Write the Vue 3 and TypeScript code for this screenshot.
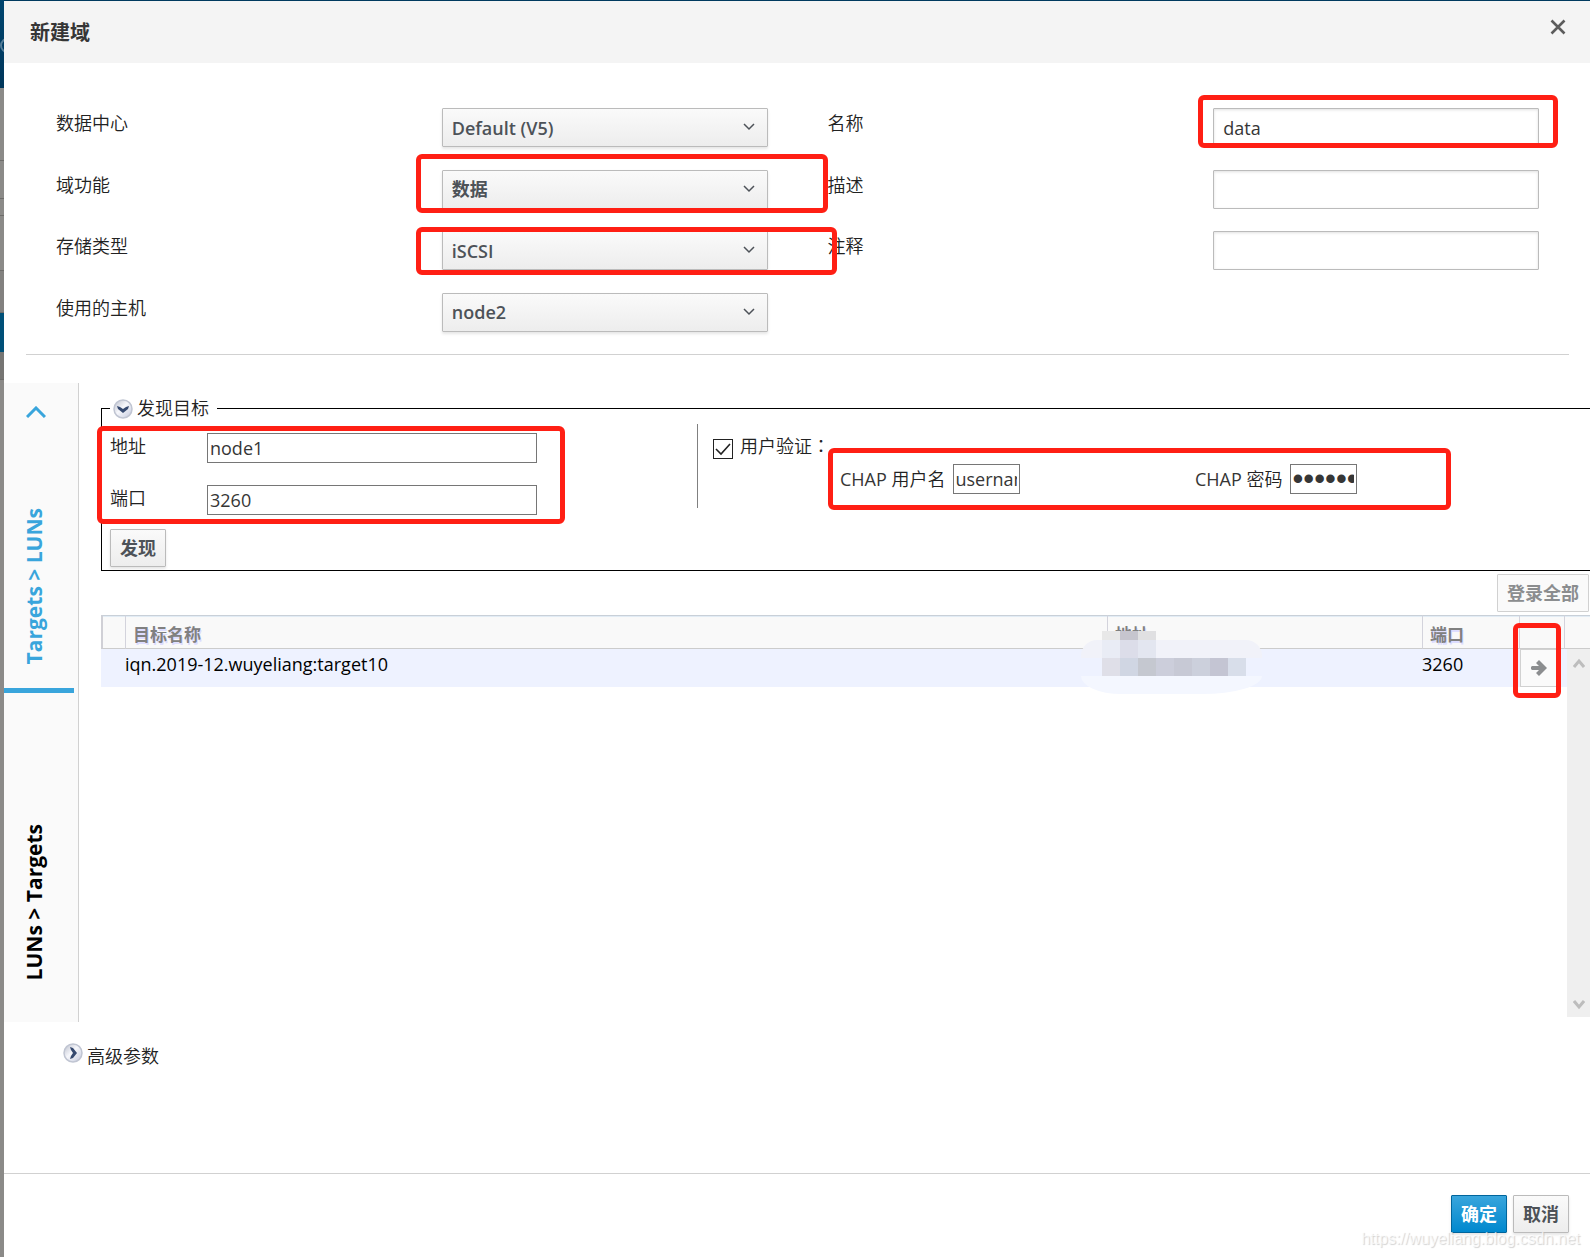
<script setup lang="ts">
import { ref } from 'vue'

interface Field {
  id: string
  label: string
  value: string
  mark?: string
}

const selects = ref<Field[]>([
  { id: 'data-center', label: '数据中心', value: 'Default (V5)' },
  { id: 'domain-function', label: '域功能', value: '数据', mark: 'mark-function' },
  { id: 'storage-type', label: '存储类型', value: 'iSCSI', mark: 'mark-type' },
  { id: 'host', label: '使用的主机', value: 'node2' },
])

const inputs = ref<Field[]>([
  { id: 'name', label: '名称', value: 'data', mark: 'mark-name' },
  { id: 'description', label: '描述', value: '' },
  { id: 'comment', label: '注释', value: '' },
])

const address = ref('node1')
const port = ref('3260')
const useAuth = ref(true)
const chapUser = ref('username')
const chapPassword = ref('password')

const targets = [{ name: 'iqn.2019-12.wuyeliang:target10', port: '3260' }]

const maskTop = ['#e8e8e8', '#c6c5ce', '#e0e0e2']
const maskMiddle = ['#e9ecf5', '#dcdde9', '#e3e6f0']
const maskBottom = ['#dfdfe8', '#d0d6e3', '#c5c8d0', '#cccedb', '#c7c9d5', '#ccd0dc', '#c4c5d3', '#d8deea']
</script>

<template>
  <div class="page">
    <div class="backdrop">
      <div class="masthead"><span class="logo-edge"></span></div>
      <div class="strip s1"></div>
      <div class="strip s2"></div>
      <div class="strip s3"></div>
      <div class="strip s4"></div>
      <div class="strip s5"></div>
      <div class="strip active"></div>
      <div class="strip dark"></div>
      <div class="strip rest"></div>
    </div>

    <section class="dialog" role="dialog" aria-labelledby="dialog-title">
      <header class="dialog-head">
        <h1 id="dialog-title">新建域</h1>
        <button class="close" type="button" aria-label="关闭">
          <svg width="16" height="16" viewBox="0 0 16 16"><path d="M1.500 1.500L14.500 14.500M14.500 1.500L1.500 14.500" stroke="#5c5c5c" stroke-width="2.600" fill="none" /></svg>
        </button>
      </header>

      <main class="dialog-body">
        <div class="form">
          <div class="column">
            <div v-for="f in selects" :key="f.id" class="field">
              <label :for="f.id">{{ f.label }}</label>
              <div class="control">
                <select :id="f.id" v-model="f.value">
                  <option>{{ f.value }}</option>
                </select>
                <svg class="caret" width="12" height="8" viewBox="0 0 12 8"><path d="M1 1L6 6L11 1" stroke="#4d5258" stroke-width="1.5" fill="none" /></svg>
                <span v-if="f.mark" class="mark" :class="f.mark"></span>
              </div>
            </div>
          </div>
          <div class="column">
            <div v-for="f in inputs" :key="f.id" class="field">
              <label :for="f.id">{{ f.label }}</label>
              <div class="control">
                <input :id="f.id" v-model="f.value" type="text" />
                <span v-if="f.mark" class="mark" :class="f.mark"></span>
              </div>
            </div>
          </div>
        </div>

        <hr />

        <div class="storage">
          <nav class="tabs">
            <button class="tab selected" type="button">
              <svg class="tab-arrow" width="20" height="12" viewBox="0 0 20 12"><path d="M1 11L10 2L19 11" stroke="#39a5dc" stroke-width="3" fill="none" /></svg>
              <span>Targets &gt; LUNs</span>
            </button>
            <button class="tab" type="button"><span>LUNs &gt; Targets</span></button>
          </nav>

          <div class="content">
            <fieldset>
              <legend>
                <svg width="20" height="20" viewBox="0 0 20 20">
                  <defs>
                    <linearGradient id="orb-a" x1="0" y1="0" x2="1" y2="1"><stop offset="0" stop-color="#b9bdca" /><stop offset=".45" stop-color="#f6f7fb" /><stop offset="1" stop-color="#c3c8dc" /></linearGradient>
                  </defs>
                  <circle cx="10" cy="10" r="9" fill="url(#orb-a)" stroke="#c0c5d2" stroke-width="1.5" />
                  <path d="M4 7L7 8L10 10L13 8L16 7L15 10L10 14L5 10Z" fill="#35496f" />
                </svg>
                发现目标
              </legend>
              <div class="discover">
                <div class="portal">
                  <div class="line">
                    <label for="address">地址</label>
                    <input id="address" v-model="address" class="plain" type="text" />
                  </div>
                  <div class="line">
                    <label for="port">端口</label>
                    <input id="port" v-model="port" class="plain" type="text" />
                  </div>
                  <span class="mark mark-portal"></span>
                </div>
                <div class="auth">
                  <span class="check">
                    <input id="auth" v-model="useAuth" type="checkbox" />
                    <svg v-if="useAuth" width="20" height="20" viewBox="0 0 20 20"><path d="M3 10L8 15L17 5" stroke="#222" stroke-width="1.6" fill="none" /></svg>
                  </span>
                  <label for="auth" class="auth-label">用户验证<span class="colon">：</span></label>
                  <div class="chap">
                    <div class="credential">
                      <label for="chap-user">CHAP <span class="han">用户名</span></label>
                      <input id="chap-user" v-model="chapUser" class="plain" type="text" />
                    </div>
                    <div class="credential">
                      <label for="chap-password">CHAP <span class="han">密码</span></label>
                      <input id="chap-password" v-model="chapPassword" class="plain" type="password" />
                    </div>
                    <span class="mark mark-chap"></span>
                  </div>
                </div>
              </div>
              <button class="btn" type="button">发现</button>
            </fieldset>

            <div class="toolbar"><button class="btn" type="button" disabled>登录全部</button></div>

            <div class="grid">
              <table>
                <colgroup>
                  <col class="c-pad" /><col /><col class="c-address" /><col class="c-port" /><col class="c-action" /><col class="c-gutter" />
                </colgroup>
                <thead>
                  <tr><th></th><th>目标名称</th><th>地址</th><th>端口</th><th></th><th></th></tr>
                </thead>
                <tbody>
                  <tr v-for="t in targets" :key="t.name">
                    <td></td>
                    <td>{{ t.name }}</td>
                    <td>
                      <div class="mask">
                        <div class="mask-row short"><i v-for="(c, i) in maskTop" :key="i" :style="{ background: c }"></i></div>
                        <div class="mask-row smear-top"><i v-for="(c, i) in maskMiddle" :key="i" :style="{ background: c }"></i></div>
                        <div class="mask-row middle"><i v-for="(c, i) in maskBottom" :key="i" :style="{ background: c }"></i></div>
                        <div class="mask-row smear-bottom"></div>
                      </div>
                    </td>
                    <td>{{ t.port }}</td>
                    <td>
                      <button class="login" type="button" aria-label="登录">
                        <svg width="16" height="16" viewBox="0 0 16 16"><path d="M1 6H8L5 3L8 0L16 8L8 16L5 13L8 10H1L0 9V7Z" fill="#8b8d8f" /></svg>
                      </button>
                      <span class="mark mark-login"></span>
                    </td>
                    <td></td>
                  </tr>
                </tbody>
              </table>
              <div class="scrollbar">
                <svg width="12" height="10" viewBox="0 0 12 10"><path d="M1 9L6 3L11 9" stroke="#bdbdbd" stroke-width="3" fill="none" /></svg>
                <svg width="12" height="10" viewBox="0 0 12 10"><path d="M1 1L6 7L11 1" stroke="#bdbdbd" stroke-width="3" fill="none" /></svg>
              </div>
            </div>
          </div>
        </div>

        <button class="advanced" type="button">
          <svg width="20" height="20" viewBox="0 0 20 20">
            <defs>
              <linearGradient id="orb-b" x1="0" y1="0" x2="1" y2="1"><stop offset="0" stop-color="#b9bdca" /><stop offset=".45" stop-color="#f6f7fb" /><stop offset="1" stop-color="#c3c8dc" /></linearGradient>
            </defs>
            <circle cx="10" cy="10" r="9" fill="url(#orb-b)" stroke="#c0c5d2" stroke-width="1.5" />
            <path d="M7 4L10 5L14 10L10 15L7 16L8 13L10 10L8 7Z" fill="#35496f" />
          </svg>
          <span>高级参数</span>
        </button>
      </main>

      <footer class="dialog-foot">
        <button class="btn primary" type="button">确定</button>
        <button class="btn" type="button">取消</button>
        <span class="watermark">https://wuyeliang.blog.csdn.net</span>
      </footer>
    </section>
  </div>
</template>

<style>
body {
  margin: 0;
  overflow-x: hidden;
}
</style>

<style scoped>
* {
  box-sizing: border-box;
}
.page {
  display: flex;
  min-height: 100vh;
  overflow: hidden;
  font: 18px/26px "Open Sans", "Noto Sans CJK SC", sans-serif;
  color: #363636;
}
button,
input,
select {
  font: inherit;
  color: inherit;
  margin: 0;
}
svg {
  display: block;
}

/* Slice of the page behind the dialog */
.backdrop {
  display: flex;
  flex-direction: column;
  flex: none;
  width: 4px;
  background: #8b8a88;
  overflow: hidden;
}
.masthead {
  position: relative;
  height: 88px;
  background: linear-gradient(#00456f, #00365a);
}
.logo-edge {
  position: absolute;
  top: 38px;
  left: 0;
  width: 15px;
  height: 15px;
  border: 2px solid #557d98;
  border-radius: 50%;
}
.strip {
  border-bottom: 1px solid #6d6c6a;
}
.s1 {
  height: 73px;
}
.s2 {
  height: 38px;
}
.s3 {
  height: 17px;
}
.s4 {
  height: 55px;
}
.s5 {
  height: 42px;
  background: #82817f;
}
.active {
  height: 39px;
  background: #005078;
  border: 0;
}
.dark {
  height: 28px;
  background: #767573;
}
.rest {
  flex: 1;
  border: 0;
}

.dialog {
  display: flex;
  flex-direction: column;
  flex: 1;
  min-width: 0;
  border-top: 1px solid #003a5f;
  background: #fff;
}
.dialog-head {
  display: flex;
  justify-content: space-between;
  align-items: flex-start;
  height: 62px;
  padding: 18px 24px 0 26px;
  background: #f4f4f4;
}
h1 {
  margin: 0;
  font-size: 20px;
  line-height: 28px;
  font-weight: 700;
}
.close {
  padding: 0;
  border: 0;
  background: none;
}
.dialog-body {
  flex: 1;
  padding-top: 45px;
}

.form {
  display: grid;
  grid-template-columns: 1fr 1fr;
  column-gap: 60px;
  padding: 0 51px 0 52px;
}
.column {
  display: grid;
  grid-template-rows: repeat(4, 1fr);
  height: 246px;
}
.field {
  display: grid;
  grid-template-columns: 1fr 1fr;
  column-gap: 60px;
  height: 39px;
}
.field label {
  line-height: 31px;
}
label,
legend,
.advanced {
  font-weight: 350;
  color: #222;
}
.credential label {
  font-weight: 400;
  color: #363636;
}
.han {
  font-weight: 350;
  color: #222;
}
.control {
  position: relative;
}
.control select,
.control input {
  display: block;
  width: 100%;
  height: 39px;
  padding: 0 9px;
  border: 1px solid #bbb;
  border-radius: 1px;
  outline: 0;
}
.control select {
  appearance: none;
  background: linear-gradient(#fafafa, #ededed);
  box-shadow: 0 2px 3px rgba(3, 3, 3, 0.1);
  font-weight: 600;
  color: #4d5258;
}
.control input {
  background: #fff;
  box-shadow: inset 0 1px 3px rgba(3, 3, 3, 0.12);
}
.caret {
  position: absolute;
  top: 15px;
  right: 13px;
  pointer-events: none;
}

/* Red highlight frames */
.mark {
  position: absolute;
  z-index: 2;
  border: 5px solid #ff1f14;
  border-radius: 6px;
  pointer-events: none;
}
.mark-name {
  inset: -13px -19px -1px -15px;
}
.mark-function {
  inset: -16px -60px -4px -26px;
}
.mark-type {
  inset: -4px -69px -5px -26px;
}
.mark-portal {
  inset: -7px -28px -9px -13px;
}
.mark-chap {
  inset: -16px -94px -16px -12px;
}
.mark-login {
  inset: -26px 3px -11px -6px;
}

hr {
  height: 1px;
  margin: 0 21px 28px 22px;
  border: 0;
  background: #d1d1d1;
}

.storage {
  display: flex;
}
.tabs {
  display: flex;
  flex-direction: column;
  flex: none;
  width: 75px;
  height: 639px;
  border-right: 1px solid #d1d1d1;
  background: #fafafa;
}
.tab {
  display: flex;
  flex-direction: column;
  align-items: center;
  justify-content: flex-end;
  width: 70px;
  height: 287px;
  padding: 0 10px 0 0;
  border: 0;
  background: none;
  color: #000;
  font-size: 21px;
  font-weight: 700;
}
.tab span {
  writing-mode: vertical-rl;
  transform: rotate(180deg);
  white-space: nowrap;
}
.selected {
  height: 310px;
  padding: 23px 10px 24px 0;
  justify-content: space-between;
  border-bottom: 5px solid #39a5dc;
  color: #39a5dc;
}
.tab-arrow {
  margin-left: 4px;
}

.content {
  flex: 1;
  min-width: 0;
  padding: 12px 0 0 22px;
}
fieldset {
  min-width: 0;
  height: 176px;
  margin: 0;
  padding: 0 0 0 8px;
  border: 1px solid #000;
  border-right: 0;
}
legend {
  display: flex;
  align-items: center;
  gap: 4px;
  height: 26px;
  padding: 0 8px 0 3px;
  line-height: 28px;
}
legend svg {
  margin-top: 2px;
}
.discover {
  display: grid;
  grid-template-columns: 587fr 893fr;
  height: 108px;
  padding-top: 3px;
}
.portal {
  position: relative;
  display: flex;
  flex-direction: column;
  gap: 22px;
  justify-self: start;
  align-self: start;
  margin-top: 9px;
}
.line {
  display: flex;
}
.line label {
  width: 97px;
}
.line .plain {
  width: 330px;
}
.plain {
  height: 30px;
  padding: 0 2px;
  border: 1px solid #767676;
  background: #fff;
  outline: 0;
}
.auth {
  display: flex;
  align-items: flex-start;
  height: 84px;
  padding-left: 15px;
  border-left: 1px solid #808080;
}
.check {
  position: relative;
  width: 20px;
  margin: 15px 7px 0 0;
}
.check input {
  display: block;
  appearance: none;
  width: 20px;
  height: 20px;
  border: 1px solid #222;
  background: #fff;
}
.check svg {
  position: absolute;
  inset: 0;
  pointer-events: none;
}
.auth-label {
  width: 100px;
  margin-top: 9px;
  white-space: nowrap;
}
.colon {
  font-family: "Noto Sans CJK TC", sans-serif;
  line-height: 1;
}
.chap {
  position: relative;
  display: flex;
  margin-top: 40px;
}
.credential {
  display: flex;
  gap: 7px;
  white-space: nowrap;
}
.credential:first-child {
  width: 355px;
}
.credential label {
  line-height: 30px;
}
.credential .plain {
  width: 67px;
}
.plain[type="password"] {
  font-family: "Liberation Sans", sans-serif;
  font-size: 31px;
  line-height: 28px;
}

.btn {
  height: 38px;
  padding: 0 9px;
  border: 1px solid #bbb;
  border-radius: 1px;
  background: linear-gradient(#fafafa, #ededed);
  box-shadow: 0 2px 3px rgba(3, 3, 3, 0.1);
  font-weight: 700;
  color: #4d5258;
}
.btn:disabled {
  border-color: #d1d1d1;
  background: #fafafa;
  box-shadow: none;
  color: #8b8d8f;
}
.primary {
  border-color: #00659c;
  background: linear-gradient(#39a5dc, #0088ce);
  color: #fff;
}
.toolbar {
  display: flex;
  justify-content: flex-end;
  padding: 3px 1px;
}

.grid {
  position: relative;
  height: 402px;
}
table {
  width: 100%;
  table-layout: fixed;
  border-collapse: separate;
  border-spacing: 0;
  color: #000;
}
.c-pad {
  width: 24px;
}
.c-address {
  width: 315px;
}
.c-port {
  width: 97px;
}
.c-action {
  width: 45px;
}
.c-gutter {
  width: 26px;
}
th {
  height: 34px;
  padding: 6px 7px 0;
  border-top: 1px solid #c9d0d8;
  border-bottom: 1px solid #ccc;
  border-left: 1px solid #d3d3dc;
  background: #f9f9f9;
  box-shadow: inset 0 1px #e2ecf5;
  text-align: left;
  font-size: 17px;
  line-height: 26px;
  font-weight: 700;
  color: #808080;
  text-shadow: 1px 2px #ddddff;
}
th:first-child {
  border-left: 2px solid #d0d0d6;
}
td {
  position: relative;
  height: 38px;
  padding: 2px 0 0;
  background: #eef2ff;
  vertical-align: top;
}
.login {
  position: absolute;
  top: 0;
  left: 1px;
  display: grid;
  place-items: center;
  width: 38px;
  height: 38px;
  padding: 0;
  border: 1px solid #d1d1d1;
  background: #fafafa;
}
.mask {
  position: absolute;
  z-index: 1;
  top: -18px;
  left: -26px;
  width: 181px;
}
.mask-row {
  display: flex;
  height: 18px;
  padding-left: 21px;
}
.mask-row i {
  width: 18px;
}
.short {
  height: 9px;
}
.smear-top {
  border-radius: 16px 16px 0 0;
  background: #f1f2f9;
}
.middle {
  background: #eef2ff;
}
.smear-bottom {
  border-radius: 0 0 60px 40px / 0 0 18px 18px;
  background: #f4f7ff;
}
.scrollbar {
  position: absolute;
  top: 34px;
  right: 0;
  bottom: 0;
  display: flex;
  flex-direction: column;
  justify-content: space-between;
  align-items: center;
  width: 23px;
  padding: 9px 0 7px;
  background: #efefef;
}

.advanced {
  display: flex;
  gap: 4px;
  margin: 21px 0 0 59px;
  padding: 0;
  border: 0;
  background: none;
}

.dialog-foot {
  position: relative;
  display: flex;
  justify-content: flex-end;
  gap: 6px;
  height: 84px;
  padding: 21px 21px 0;
  border-top: 1px solid #d1d1d1;
}
.watermark {
  position: absolute;
  right: 10px;
  bottom: 6px;
  font: 16px/24px "Liberation Sans", sans-serif;
  color: rgba(255, 255, 255, 0.7);
  text-shadow: 1px 1px 1px rgba(0, 0, 0, 0.18);
}
</style>
